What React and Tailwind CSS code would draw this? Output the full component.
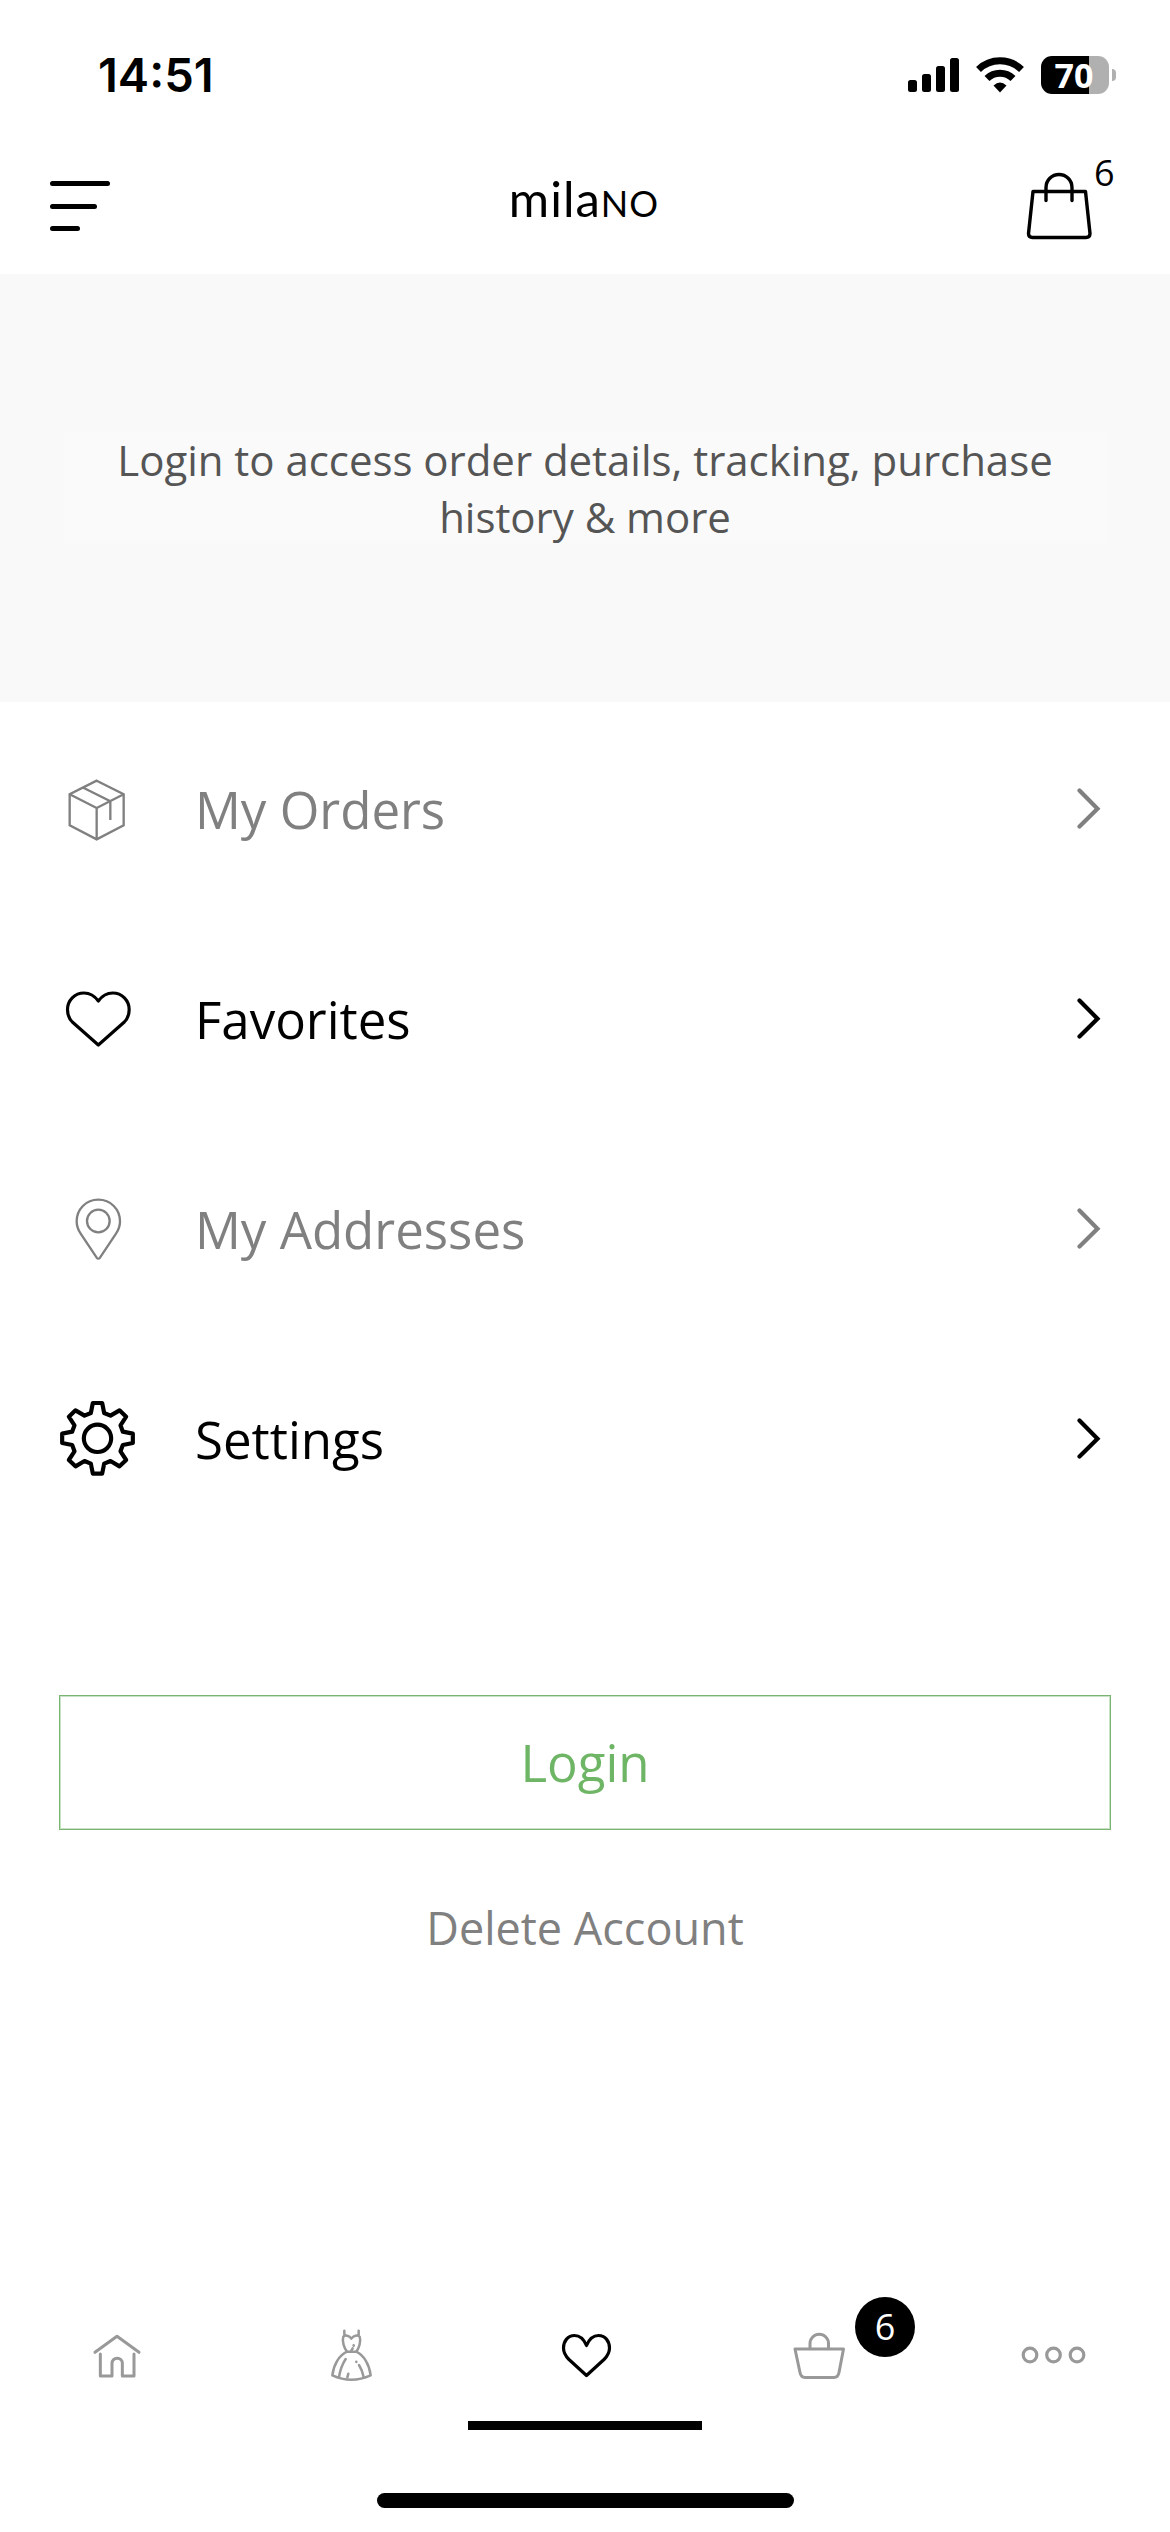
import React from 'react';
import clsx from 'clsx';

const BoxIcon = () => (
  <svg viewBox="0 0 240 240" className="size-20" fill="none" stroke="currentColor" strokeWidth="7">
    <path d="M110 32L191 73V166L110 208L29 166V73ZM29 73L110 114L191 73M110 114V208M70 53L151 94V150" />
  </svg>
);

const HeartIcon = () => (
  <svg viewBox="0 0 240 240" className="size-20" fill="none" stroke="currentColor" strokeWidth="9.5" strokeLinejoin="round">
    <path d="M115 63C104 48 90 39 72 39C44 39 22.5 61 22.5 89C22.5 104 28 117 37 126L115 195L193 126C202 117 207.5 104 207.5 89C207.5 61 186 39 158 39C140 39 126 48 115 63Z" />
  </svg>
);

const PinIcon = () => (
  <svg viewBox="0 0 240 240" className="size-20" fill="none" stroke="currentColor" strokeWidth="7">
    <path d="M115 29C78 29 50 58 50 94C50 108 55 121 62 131L110 203Q115 209 120 203L168 131C175 121 180 108 180 94C180 58 152 29 115 29Z" />
    <circle cx="115" cy="93" r="34" />
  </svg>
);

const GearIcon = () => (
  <svg viewBox="0 0 240 240" className="size-20" fill="none" stroke="currentColor" strokeWidth="12.5" strokeLinejoin="round">
    <g transform="translate(112.5 115)">
      <path d="M14-106L20-76L39-68L66-84L86-65L69-39L76-20L106-14V14L76 20L69 39L86 65L66 84L39 68L20 76L14 106H-14L-20 76L-39 68L-66 84L-86 65L-69 39L-76 20L-106 14V-14L-76-20L-69-39L-86-65L-66-84L-39-68L-20-76L-14-106Z" />
      <circle r="41" />
    </g>
  </svg>
);

const Chevron = () => (
  <svg viewBox="0 0 26 44" className="w-[26px] h-[44px]" fill="none" stroke="currentColor" strokeWidth="4.2" strokeLinecap="round">
    <path d="M4.500 2.500L22.500 20.700L4.500 38.500" />
  </svg>
);

const menuItems = [
  { label: 'My Orders', Icon: BoxIcon, enabled: false },
  { label: 'Favorites', Icon: HeartIcon, enabled: true },
  { label: 'My Addresses', Icon: PinIcon, enabled: false },
  { label: 'Settings', Icon: GearIcon, enabled: true },
];

const StatusBar = () => (
  <div className="h-[150px] pl-[98px] pr-[54px] flex items-center justify-between">
    <span className="pb-[2px] font-['Inter'] font-semibold text-[47px] leading-none">14:51</span>
    <div className="flex items-center gap-[17px]">
      <svg viewBox="0 0 51 36" className="w-[51px] h-9" fill="currentColor">
        <rect x="0" y="23" width="9" height="12" rx="2.5" />
        <rect x="14" y="17" width="9" height="18" rx="2.5" />
        <rect x="28" y="9" width="9" height="26" rx="2.5" />
        <rect x="42" y="1" width="9" height="34" rx="2.5" />
      </svg>
      <svg viewBox="0 0 48 36" className="w-12 h-9" fill="none" stroke="currentColor" strokeWidth="7">
        <path d="M2.5 12.5A31 31 0 0 1 45.500 12.5" />
        <path d="M11 21.500A18.500 18.500 0 0 1 37 21.500" />
        <path d="M17.500 28.500Q24 22.500 30.500 28.500L24 35.500Z" fill="currentColor" stroke="none" />
      </svg>
      <div className="flex items-center gap-[3px]">
        <div className="w-[68px] h-[38px] rounded-[11px] flex items-center justify-center bg-[linear-gradient(90deg,#000_48px,#b0b0b0_48px)]">
          <span className="pr-[2px] font-bold text-[34px] leading-[38px] text-white">70</span>
        </div>
        <div className="w-1 h-3 rounded-r-full bg-[#b0b0b0]" />
      </div>
    </div>
  </div>
);

const Header = () => (
  <header className="h-[124px] pl-[50px] pr-[56px] flex items-start justify-between">
    <div className="w-[88px] pt-[31px] flex flex-col gap-[17.5px]">
      <span className="w-[60px] h-[5px] rounded-full bg-black" />
      <span className="w-[47px] h-[5px] rounded-full bg-black" />
      <span className="w-[30px] h-[5px] rounded-full bg-black" />
    </div>
    <div className="pt-[20px] pl-[4px] font-['Lato'] text-[49px] leading-[56px] tracking-[1px]">
      mila<span className="uppercase text-[36px]">no</span>
    </div>
    <div className="w-[88px] flex">
      <svg viewBox="0 0 68 92" className="w-[68px] h-[92px] shrink-0" fill="none" stroke="currentColor" strokeWidth="3.4" strokeLinecap="round" strokeLinejoin="round">
        <path d="M7 41.500H59.500L64 83.500Q64 87.500 60 87.500H6.500Q2.500 87.500 2.500 83.500Z" />
        <path d="M20 50.500V37.500A13 13 0 0 1 46 37.500V50.500" />
      </svg>
      <span className="text-[36px] leading-[46px]">6</span>
    </div>
  </header>
);

const HomeIcon = () => (
  <svg viewBox="0 0 180 180" className="size-[60px]" fill="none" stroke="currentColor" strokeWidth="9" strokeLinecap="round" strokeLinejoin="round">
    <path d="M24 79L90 31L156 79M40 84V150H75V112A15.500 15.500 0 0 1 106 112V150H141V84" />
  </svg>
);

const DressIcon = () => (
  <svg viewBox="0 0 180 180" className="size-[60px]" fill="none" stroke="currentColor" strokeWidth="7.5" strokeLinecap="round" strokeLinejoin="round">
    <path d="M70 14V30M113 14V30M91 38C85 29 73 26 67 32C62 46 70 66 78 77H106C114 66 121 46 116 32C110 26 97 29 91 38Z" />
    <path d="M78 77C54 88 38 116 34 148Q91 174 149 148C145 116 129 88 106 77" />
    <path d="M74 99Q59 122 54 153M82 143L79 154M114 117Q124 133 128 153M106 107V108M98 58V59M95 67L91 74" />
  </svg>
);

const NavHeartIcon = () => (
  <svg viewBox="0 0 60 60" className="size-[60px]" fill="none" stroke="currentColor" strokeWidth="3.2" strokeLinejoin="round">
    <path d="M31.500 19.500C29 13.500 25 9.500 19.500 9.500C13 9.500 8.500 15 8.500 22C8.500 26.500 10.500 30 14 33.500L31.500 49.500L49 33.500C52.500 30 54.500 26.500 54.500 22C54.500 15 50 9.500 43.500 9.500C38 9.500 34 13.500 31.500 19.500Z" />
  </svg>
);

const BasketIcon = () => (
  <svg viewBox="0 0 60 60" className="size-[60px]" fill="none" stroke="currentColor" strokeWidth="3" strokeLinejoin="round">
    <path d="M6 23H54.500L50 46.500Q49 51.500 45 51.500H16Q12 51.500 11 46.500ZM21 23V17.500A9.250 9.250 0 0 1 39.500 17.500V23" />
  </svg>
);

const MoreIcon = () => (
  <svg viewBox="0 0 70 60" className="w-[70px] h-[60px]" fill="none" stroke="currentColor" strokeWidth="3.2">
    <circle cx="12" cy="29" r="6.8" />
    <circle cx="35.500" cy="29" r="6.8" />
    <circle cx="59" cy="29" r="6.8" />
  </svg>
);

const tabs = [
  { id: 'home', Icon: HomeIcon },
  { id: 'shop', Icon: DressIcon },
  { id: 'favorites', Icon: NavHeartIcon, active: true },
  { id: 'cart', Icon: BasketIcon, badge: 6 },
  { id: 'more', Icon: MoreIcon },
];

export default function App() {
  return (
    <div className="w-[1170px] h-[2532px] bg-white text-black font-['Open_Sans',sans-serif] flex flex-col overflow-hidden">
      <StatusBar />
      <Header />

      <section className="h-[428px] bg-[#f9f9f9] px-[64px] pt-[157px]">
        <p className="h-[114px] px-10 bg-[#fafafa] text-center text-[42px] leading-[57px] tracking-[-0.03px] text-[#555]">
          Login to access order details, tracking, purchase history &amp; more
        </p>
      </section>

      <nav className="pt-[3px]">
        {menuItems.map(({ label, Icon, enabled }) => (
          <button
            key={label}
            className={clsx('w-full h-[210px] pl-[60px] pr-[69px] flex items-center text-left', enabled ? 'text-black' : 'text-[#808080]')}
          >
            <Icon />
            <span className="flex-1 ml-[55px] pb-[3px] text-[51px] leading-[70px]">{label}</span>
            <Chevron />
          </button>
        ))}
      </nav>

      <div className="px-[59px] pt-[150px] flex flex-col items-center">
        <button className="w-full h-[135px] border border-[#7ab573] shadow-[inset_0_0_0_1px_#c8e2c5] text-[51px] text-[#6fb566]">
          Login
        </button>
        <button className="mt-[67px] text-[45px] leading-[62px] text-[#808080]">Delete Account</button>
      </div>

      <footer className="mt-auto h-[236px] flex flex-col items-center">
        <div className="w-full h-[134px] grid grid-cols-5">
          {tabs.map(({ id, Icon, active, badge }) => (
            <button
              key={id}
              className={clsx('relative pt-[30px] flex justify-center border-b-[9px]', active ? 'text-black border-black' : 'text-[#999] border-transparent')}
            >
              <Icon />
              {badge && (
                <span className="absolute left-[153px] top-[1px] size-[60px] rounded-full bg-black text-white text-[36px] leading-[60px] text-center">
                  {badge}
                </span>
              )}
            </button>
          ))}
        </div>
        <div className="mt-[63px] w-[417px] h-[15px] rounded-full bg-black" />
      </footer>
    </div>
  );
}
